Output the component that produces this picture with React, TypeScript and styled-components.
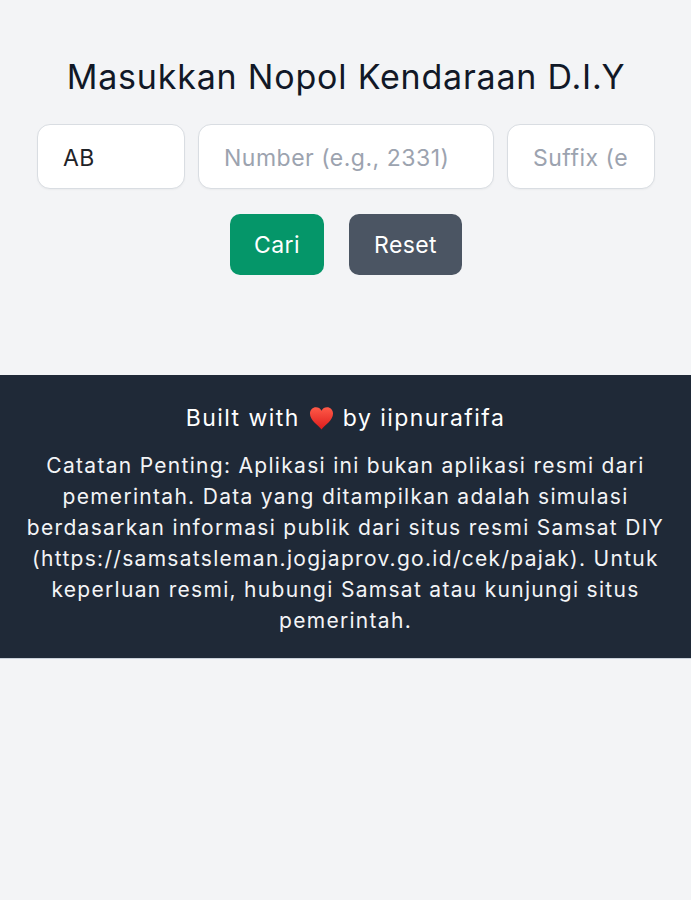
import React from 'react';
import styled, { createGlobalStyle } from 'styled-components';

const GlobalStyle = createGlobalStyle`
  html, body {
    margin: 0;
    padding: 0;
    background: #f3f4f6;
  }
  * {
    box-sizing: border-box;
  }
`;

const Page = styled.div`
  min-height: 900px;
  background: #f3f4f6;
  font-family: Inter, "Liberation Sans", sans-serif;
`;

const Main = styled.main`
  height: 375px;
  padding: 55px 36px 0 37px;
`;

const Title = styled.h1`
  margin: 0 0 26px;
  font-size: 34px;
  line-height: 43px;
  font-weight: 400;
  letter-spacing: 0.8px;
  text-align: center;
  color: #111827;
`;

const InputRow = styled.div`
  display: grid;
  grid-template-columns: 1fr 2fr 1fr;
  gap: 13px;
  margin-bottom: 25px;
`;

const PlateInput = styled.input`
  min-width: 0;
  width: 100%;
  height: 65px;
  padding: 2px 27px 0 25px;
  border: 1.5px solid #d9dde2;
  border-radius: 13px;
  background: #fff;
  font-family: inherit;
  font-size: 23px;
  letter-spacing: 0.5px;
  color: #1f2328;
  outline: none;
  box-shadow: 0 1px 2px rgba(0, 0, 0, 0.04);

  &::placeholder {
    color: #9ca3af;
    opacity: 1;
  }
`;

const ButtonRow = styled.div`
  display: flex;
  justify-content: center;
  gap: 25px;
`;

const ActionButton = styled.button<{ $tone: string; $width: number }>`
  width: ${p => p.$width}px;
  height: 61px;
  padding: 0;
  border: none;
  border-radius: 10px;
  background: ${p => p.$tone};
  color: #fff;
  font-family: inherit;
  font-size: 23px;
  letter-spacing: 0.4px;
`;

const Footer = styled.footer`
  height: 284px;
  padding: 27px 20px 0;
  background: #1f2937;
  border-bottom: 1px solid #c9d0d9;
  color: #fff;
  text-align: center;
`;

const Credit = styled.p`
  margin: 0 0 16px;
  display: flex;
  justify-content: center;
  align-items: center;
  gap: 9px;
  font-size: 23px;
  line-height: 32px;
  letter-spacing: 1.45px;
`;

const Note = styled.p`
  margin: 0;
  font-size: 21px;
  line-height: 31px;
  letter-spacing: 1.3px;
  color: #f3f4f6;
`;

const Heart = () => (
  <svg width="25" height="24" viewBox="0 0 26 24" aria-hidden="true">
    <defs>
      <linearGradient id="heartFill" x1="0" y1="0" x2="0" y2="1">
        <stop offset="0" stopColor="#ff5a48" />
        <stop offset="1" stopColor="#dc1c1c" />
      </linearGradient>
    </defs>
    <path
      d="M13 24C9.500 19.500 1 14.500 1 7.400 1 3.400 3.900 .8 7.200 .8 9.700 .8 11.800 2 13 4.400 14.200 2 16.300 .8 18.800 .8 22.100 .8 25 3.400 25 7.400 25 14.500 16.500 19.500 13 24Z"
      fill="url(#heartFill)"
    />
  </svg>
);

export default function App() {
  return (
    <Page>
      <GlobalStyle />
      <Main>
        <Title>Masukkan Nopol Kendaraan D.I.Y</Title>
        <InputRow>
          <PlateInput defaultValue="AB" />
          <PlateInput placeholder="Number (e.g., 2331)" />
          <PlateInput placeholder="Suffix (e.g., XY)" />
        </InputRow>
        <ButtonRow>
          <ActionButton $tone="#059669" $width={94}>Cari</ActionButton>
          <ActionButton $tone="#4b5563" $width={113}>Reset</ActionButton>
        </ButtonRow>
      </Main>
      <Footer>
        <Credit>
          <span>Built with</span>
          <Heart />
          <span>by iipnurafifa</span>
        </Credit>
        <Note>
          Catatan Penting: Aplikasi ini bukan aplikasi resmi dari pemerintah. Data yang ditampilkan
          adalah simulasi berdasarkan informasi publik dari situs resmi Samsat DIY
          (https://samsatsleman.jogjaprov.go.id/cek/pajak). Untuk keperluan resmi, hubungi Samsat
          atau kunjungi situs pemerintah.
        </Note>
      </Footer>
    </Page>
  );
}
